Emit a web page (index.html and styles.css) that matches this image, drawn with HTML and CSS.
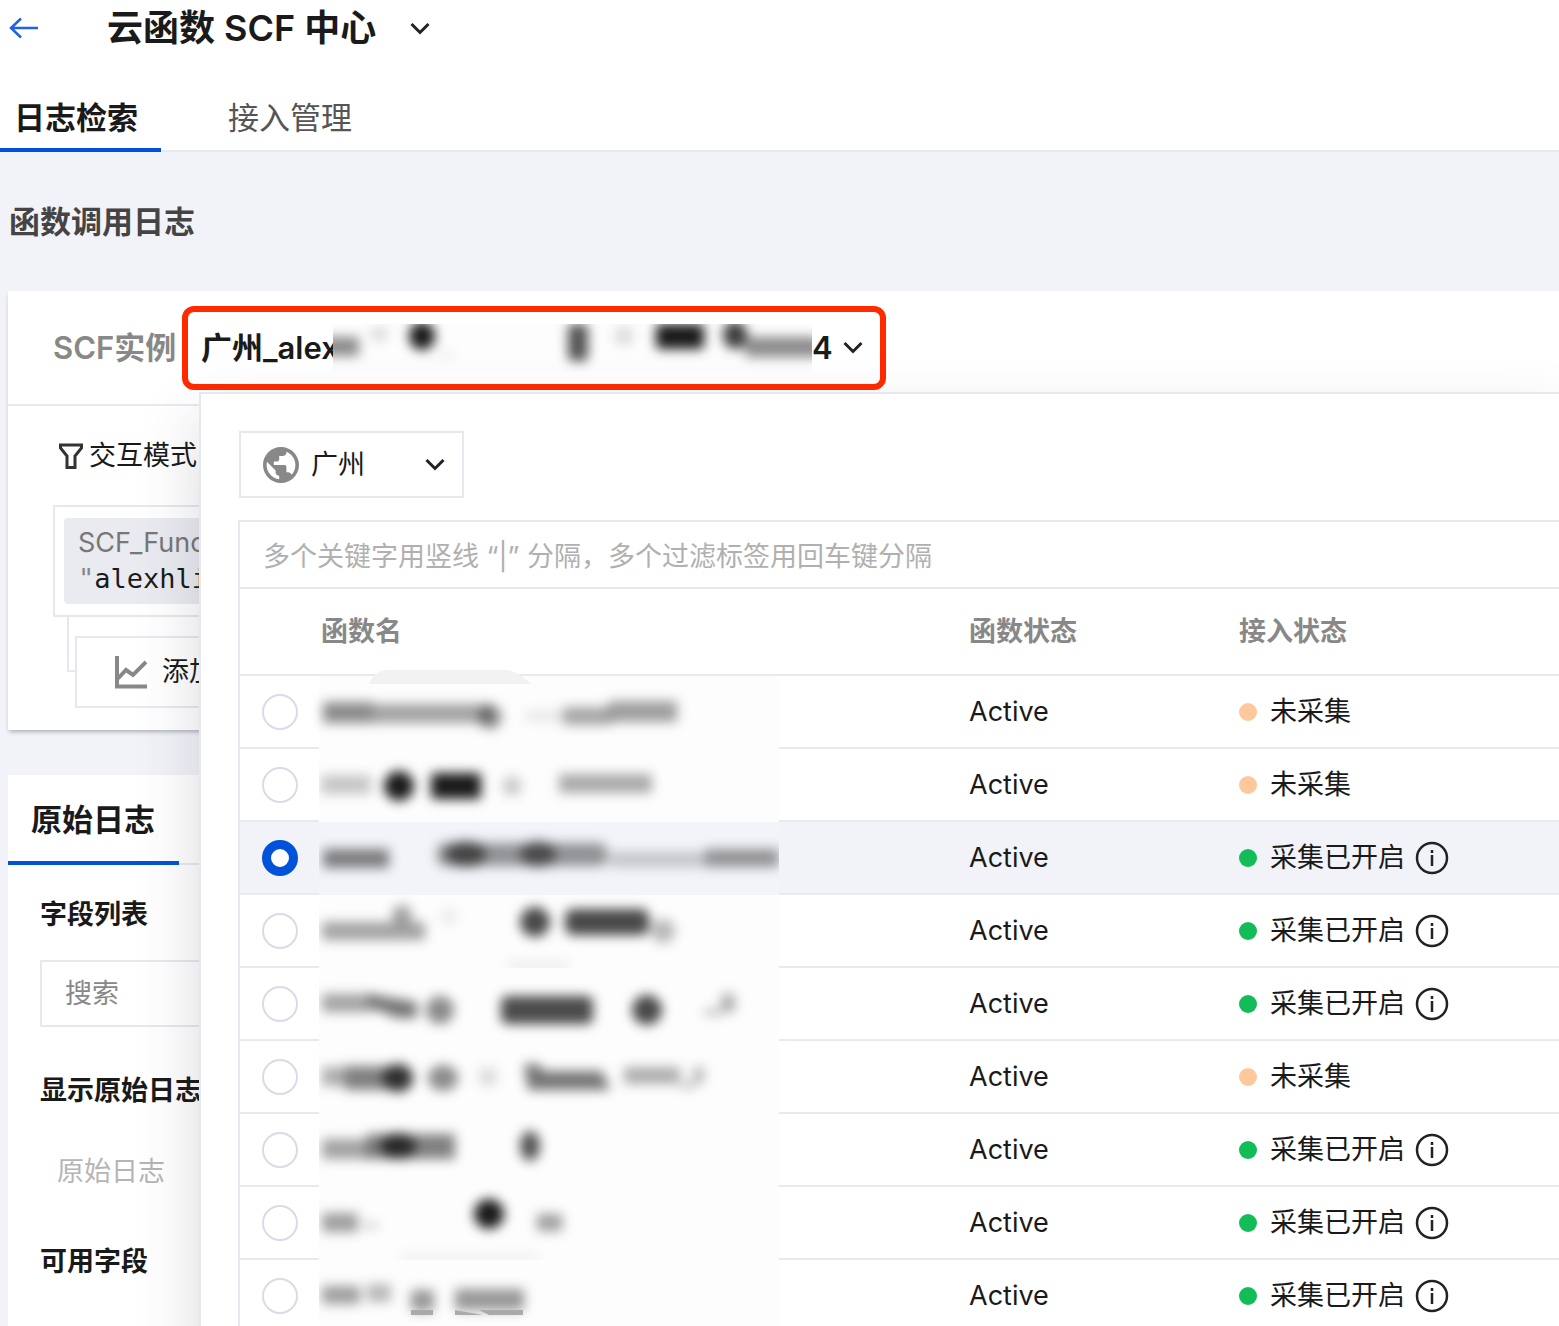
FILE: index.html
```html
<!DOCTYPE html>
<html lang="zh-CN">
<head>
    <meta charset="UTF-8">
    <title>云函数 SCF 中心</title>
    <link rel="stylesheet" href="styles.css">
</head>
<body>
    <div class="page">
        <header class="header">
            <div class="title-bar">
                <a href="#" class="back" aria-label="返回">
                    <svg width="30" height="22" viewBox="0 0 30 22"><path d="M12 1.500 2 11l10 9.500M2 11h27" fill="none" stroke="#1f62e6" stroke-width="2.500"/></svg>
                </a>
                <h1>云函数 SCF 中心</h1>
                <button class="icon-button" aria-label="切换">
                    <svg class="chevron" viewBox="0 0 20 13"><path d="M1.500 2 10 10.500 18.500 2"/></svg>
                </button>
            </div>
            <nav class="tabs">
                <a href="#" class="tab active">日志检索</a>
                <a href="#" class="tab">接入管理</a>
            </nav>
        </header>

        <h2 class="section-title">函数调用日志</h2>

        <main class="content">
            <section class="card query-card">
                <div class="instance-bar">
                    <span class="instance-label">SCF实例</span>
                    <button class="instance-button">
                        <span class="instance-start">广州_alexh</span>
                        <svg class="mosaic mosaic-title" viewBox="0 0 479 48">
                            <g>
                                <rect x="-10" y="13" width="36" height="19" opacity=".5"/>
                                <ellipse cx="46" cy="10" rx="9" ry="8" opacity=".14"/>
                                <ellipse cx="89" cy="12" rx="13" ry="14"/>
                                <rect x="105" y="26" width="16" height="8" opacity=".06"/>
                                <rect x="235" y="0" width="20" height="37" rx="5" opacity=".75"/>
                                <circle cx="291" cy="12" r="10" opacity=".14"/>
                                <rect x="323" y="0" width="48" height="25" rx="4"/>
                                <ellipse cx="402" cy="11" rx="12" ry="14" opacity=".85"/>
                                <rect x="412" y="13" width="76" height="20" opacity=".5"/>
                            </g>
                        </svg>
                        <span class="instance-end">4</span>
                        <svg class="chevron" viewBox="0 0 20 13"><path d="M1.500 2 10 10.500 18.500 2"/></svg>
                    </button>
                </div>

                <div class="query-body">
                    <button class="mode">
                        <svg width="24" height="26" viewBox="0 0 24 26"><path d="M1.500 2h21v3L16 13v11.500H8V13L1.500 5z" fill="none" stroke="#333" stroke-width="3"/></svg>
                        <span>交互模式</span>
                    </button>
                    <div class="query-box">
                        <div class="chip">
                            <div class="chip-key">SCF_FunctionName</div>
                            <div class="chip-value"><span class="quote">"</span>alexhli</div>
                        </div>
                    </div>
                    <div class="add-row">
                        <div class="branch"></div>
                        <button class="add-button">
                            <svg width="32" height="33" viewBox="0 0 32 33"><path d="M2 0v30.500h30" fill="none" stroke="#888" stroke-width="4"/><path d="M3 22.500 11 14l7 5L31 6" fill="none" stroke="#888" stroke-width="4"/></svg>
                            <span>添加</span>
                        </button>
                    </div>
                </div>

                <div class="dropdown">
                    <div class="region">
                        <svg width="36" height="36" viewBox="2 2 20 20"><path fill="#888" d="M12 2C6.480 2 2 6.480 2 12s4.480 10 10 10 10-4.480 10-10S17.520 2 12 2zm-1 17.930c-3.950-.490-7-3.850-7-7.930 0-.620.080-1.210.210-1.790L9 15v1c0 1.100.900 2 2 2v1.930zm6.900-2.540c-.260-.810-1-1.390-1.900-1.390h-1v-3c0-.550-.450-1-1-1H8v-2h2c.550 0 1-.450 1-1V7h2c1.100 0 2-.900 2-2v-.410c2.930 1.190 5 4.060 5 7.410 0 2.080-.800 3.970-2.100 5.390z"/></svg>
                        <select aria-label="地域">
                            <option>广州</option>
                        </select>
                        <svg class="chevron" viewBox="0 0 20 13"><path d="M1.500 2 10 10.500 18.500 2"/></svg>
                    </div>

                    <div class="functions">
                        <input class="filter" type="text" aria-label="过滤" placeholder="多个关键字用竖线 “|” 分隔，多个过滤标签用回车键分隔">
                        <table>
                            <thead>
                                <tr>
                                    <th class="col-radio"></th>
                                    <th class="col-name">函数名</th>
                                    <th class="col-status">函数状态</th>
                                    <th>接入状态</th>
                                </tr>
                            </thead>
                            <tbody>
                                <tr>
                                    <td class="pick"><input type="radio" name="fn" aria-label="函数 1"></td>
                                    <td class="name">
                                        <svg class="mosaic mosaic-first" viewBox="0 0 460 73">
                                            <path class="tab-shape" d="M50 8Q56-6 68-6H186Q198-6 212 8z"/>
                                            <g>
                                                <rect x="4" y="26" width="50" height="21" opacity=".5"/>
                                                <rect x="54" y="28" width="120" height="19" opacity=".4"/>
                                                <circle cx="171" cy="41" r="12" opacity=".45"/>
                                                <rect x="206" y="35" width="38" height="10" opacity=".1"/>
                                                <rect x="244" y="31" width="48" height="18" opacity=".38"/>
                                                <rect x="290" y="25" width="68" height="21" opacity=".42"/>
                                            </g>
                                        </svg>
                                    </td>
                                    <td>Active</td>
                                    <td><div class="state"><i class="dot"></i>未采集</div></td>
                                </tr>
                                <tr>
                                    <td class="pick"><input type="radio" name="fn" aria-label="函数 2"></td>
                                    <td class="name">
                                        <svg class="mosaic" viewBox="0 0 460 73">
                                            <g>
                                                <rect x="2" y="26" width="50" height="19" opacity=".24"/>
                                                <ellipse cx="80" cy="37" rx="15" ry="15"/>
                                                <rect x="112" y="24" width="50" height="26" rx="4"/>
                                                <circle cx="193" cy="37" r="10" opacity=".22"/>
                                                <rect x="240" y="25" width="93" height="19" opacity=".36"/>
                                            </g>
                                        </svg>
                                    </td>
                                    <td>Active</td>
                                    <td><div class="state"><i class="dot"></i>未采集</div></td>
                                </tr>
                                <tr class="selected">
                                    <td class="pick"><input type="radio" name="fn" aria-label="函数 3" checked></td>
                                    <td class="name">
                                        <svg class="mosaic" viewBox="0 0 460 73">
                                            <g>
                                                <rect x="4" y="27" width="66" height="19" opacity=".55"/>
                                                <rect x="118" y="21" width="170" height="23" rx="8" opacity=".45"/>
                                                <ellipse cx="147" cy="32" rx="20" ry="13" opacity=".65"/>
                                                <ellipse cx="219" cy="32" rx="18" ry="13" opacity=".6"/>
                                                <rect x="290" y="30" width="96" height="15" opacity=".22"/>
                                                <rect x="386" y="27" width="74" height="18" opacity=".45"/>
                                            </g>
                                        </svg>
                                    </td>
                                    <td>Active</td>
                                    <td><div class="state on"><i class="dot"></i>采集已开启<svg class="info" viewBox="0 0 34 34"><circle cx="17" cy="17" r="15"/><path d="M17 14v11M17 9v3"/></svg></div></td>
                                </tr>
                                <tr>
                                    <td class="pick"><input type="radio" name="fn" aria-label="函数 4"></td>
                                    <td class="name">
                                        <svg class="mosaic" viewBox="0 0 460 73">
                                            <g>
                                                <rect x="3" y="27" width="103" height="18" opacity=".4"/>
                                                <circle cx="83" cy="20" r="10" opacity=".4"/>
                                                <circle cx="130" cy="22" r="9" opacity=".07"/>
                                                <ellipse cx="216" cy="27" rx="15" ry="15" opacity=".8"/>
                                                <rect x="246" y="14" width="84" height="26" rx="8" opacity=".8"/>
                                                <circle cx="344" cy="36" r="12" opacity=".3"/>
                                                <rect x="188" y="66" width="62" height="10" opacity=".07"/>
                                            </g>
                                        </svg>
                                    </td>
                                    <td>Active</td>
                                    <td><div class="state on"><i class="dot"></i>采集已开启<svg class="info" viewBox="0 0 34 34"><circle cx="17" cy="17" r="15"/><path d="M17 14v11M17 9v3"/></svg></div></td>
                                </tr>
                                <tr>
                                    <td class="pick"><input type="radio" name="fn" aria-label="函数 5"></td>
                                    <td class="name">
                                        <svg class="mosaic" viewBox="0 0 460 73">
                                            <g>
                                                <rect x="3" y="26" width="50" height="18" opacity=".4"/>
                                                <path d="M50 26 98 34v16H78L50 39z" opacity=".6"/>
                                                <circle cx="121" cy="42" r="14" opacity=".5"/>
                                                <rect x="182" y="28" width="92" height="28" rx="6" opacity=".78"/>
                                                <circle cx="328" cy="42" r="15" opacity=".8"/>
                                                <rect x="385" y="42" width="18" height="5" opacity=".35"/>
                                                <rect x="402" y="26" width="14" height="18" opacity=".35"/>
                                            </g>
                                        </svg>
                                    </td>
                                    <td>Active</td>
                                    <td><div class="state on"><i class="dot"></i>采集已开启<svg class="info" viewBox="0 0 34 34"><circle cx="17" cy="17" r="15"/><path d="M17 14v11M17 9v3"/></svg></div></td>
                                </tr>
                                <tr>
                                    <td class="pick"><input type="radio" name="fn" aria-label="函数 6"></td>
                                    <td class="name">
                                        <svg class="mosaic" viewBox="0 0 460 73">
                                            <g>
                                                <rect x="3" y="26" width="24" height="19" opacity=".35"/>
                                                <rect x="26" y="25" width="44" height="24" opacity=".55"/>
                                                <ellipse cx="79" cy="37" rx="15" ry="14" opacity=".9"/>
                                                <ellipse cx="124" cy="37" rx="15" ry="13" opacity=".5"/>
                                                <circle cx="169" cy="36" r="10" opacity=".14"/>
                                                <path d="M205 23h14l6 7h58l8 19h-82z" opacity=".6"/>
                                                <rect x="305" y="26" width="56" height="17" opacity=".35"/>
                                                <rect x="362" y="42" width="14" height="5" opacity=".35"/>
                                                <rect x="374" y="26" width="11" height="16" opacity=".3"/>
                                            </g>
                                        </svg>
                                    </td>
                                    <td>Active</td>
                                    <td><div class="state"><i class="dot"></i>未采集</div></td>
                                </tr>
                                <tr>
                                    <td class="pick"><input type="radio" name="fn" aria-label="函数 7"></td>
                                    <td class="name">
                                        <svg class="mosaic" viewBox="0 0 460 73">
                                            <g>
                                                <rect x="3" y="25" width="48" height="20" opacity=".4"/>
                                                <rect x="48" y="20" width="88" height="25" opacity=".55"/>
                                                <ellipse cx="79" cy="32" rx="18" ry="13" opacity=".85"/>
                                                <ellipse cx="211" cy="32" rx="10" ry="15" opacity=".75"/>
                                            </g>
                                        </svg>
                                    </td>
                                    <td>Active</td>
                                    <td><div class="state on"><i class="dot"></i>采集已开启<svg class="info" viewBox="0 0 34 34"><circle cx="17" cy="17" r="15"/><path d="M17 14v11M17 9v3"/></svg></div></td>
                                </tr>
                                <tr>
                                    <td class="pick"><input type="radio" name="fn" aria-label="函数 8"></td>
                                    <td class="name">
                                        <svg class="mosaic" viewBox="0 0 460 73">
                                            <g>
                                                <rect x="3" y="26" width="36" height="19" opacity=".42"/>
                                                <rect x="46" y="36" width="12" height="5" opacity=".3"/>
                                                <circle cx="170" cy="27" r="15"/>
                                                <rect x="218" y="27" width="25" height="17" opacity=".42"/>
                                                <rect x="80" y="66" width="140" height="10" opacity=".05"/>
                                            </g>
                                        </svg>
                                    </td>
                                    <td>Active</td>
                                    <td><div class="state on"><i class="dot"></i>采集已开启<svg class="info" viewBox="0 0 34 34"><circle cx="17" cy="17" r="15"/><path d="M17 14v11M17 9v3"/></svg></div></td>
                                </tr>
                                <tr>
                                    <td class="pick"><input type="radio" name="fn" aria-label="函数 9"></td>
                                    <td class="name">
                                        <svg class="mosaic" viewBox="0 0 460 73">
                                            <g>
                                                <rect x="3" y="26" width="38" height="18" opacity=".42"/>
                                                <rect x="48" y="24" width="24" height="18" opacity=".3"/>
                                                <rect x="92" y="30" width="23" height="21" opacity=".45"/>
                                                <rect x="136" y="29" width="69" height="21" opacity=".45"/>
                                            </g>
                                            <path class="sharp" d="M92 50h22v5H92zM136 50l28 5h-28zM160 50h44v5h-34z"/>
                                        </svg>
                                    </td>
                                    <td>Active</td>
                                    <td><div class="state on"><i class="dot"></i>采集已开启<svg class="info" viewBox="0 0 34 34"><circle cx="17" cy="17" r="15"/><path d="M17 14v11M17 9v3"/></svg></div></td>
                                </tr>
                            </tbody>
                        </table>
                    </div>
                </div>
            </section>

            <section class="card log-card">
                <nav class="log-tabs">
                    <a href="#" class="log-tab">原始日志</a>
                </nav>
                <div class="fields">
                    <h3>字段列表</h3>
                    <input class="field-search" type="text" aria-label="搜索" placeholder="搜索">
                    <h3>显示原始日志</h3>
                    <p class="muted">原始日志</p>
                    <h3>可用字段</h3>
                </div>
            </section>
        </main>
    </div>
</body>
</html>
```
FILE: styles.css
```css
* {
    box-sizing: border-box;
}
body {
    margin: 0;
    font-family: Inter, "Noto Sans CJK SC", sans-serif;
    font-size: 27px;
    line-height: 36px;
    color: #1a1a1a;
    background-color: #f2f3f8;
}
button, input, select {
    font: inherit;
    color: inherit;
    background: none;
    border: none;
    border-radius: 0;
    padding: 0;
    margin: 0;
}
a {
    color: inherit;
    text-decoration: none;
}
h1, h2, h3, p {
    margin: 0;
}
svg {
    flex: none;
    display: block;
}
.page {
    height: 100vh;
    overflow: hidden;
    display: flex;
    flex-direction: column;
}
.chevron {
    width: 20px;
    height: 13px;
    fill: none;
    stroke: #222;
    stroke-width: 3;
}

/* header */
.header {
    background-color: white;
}
.title-bar {
    display: flex;
    align-items: center;
    height: 56px;
    padding-left: 9px;
}
.title-bar h1 {
    margin: 0 34px 0 68px;
    font-size: 36px;
    font-weight: 600;
}
.tabs {
    display: flex;
    margin-top: 30px;
    border-bottom: 2px solid #e7eaef;
}
.tab {
    height: 66px;
    margin: 0 53px -2px 0;
    padding: 14px 23px 0 14px;
    font-size: 31px;
    color: #555;
}
.tab.active {
    color: #1a1a1a;
    font-weight: 600;
    border-bottom: 4px solid #0052d9;
}
.section-title {
    padding: 52px 9px 51px;
    font-size: 31px;
    font-weight: 600;
    color: #444;
}

/* query card */
.content {
    flex: 1;
    display: flex;
    flex-direction: column;
    gap: 45px;
    padding-left: 8px;
}
.card {
    flex: none;
    background-color: white;
}
.query-card {
    position: relative;
    box-shadow: 0 3px 4px -1px rgba(54, 58, 80, 0.35);
}
.instance-bar {
    display: flex;
    align-items: center;
    height: 115px;
    padding-left: 45px;
    border-bottom: 2px solid #e7eaef;
    font-size: 31px;
    font-weight: 600;
}
.instance-label {
    width: 129px;
    color: #888;
    white-space: nowrap;
}
.instance-button {
    display: flex;
    align-items: center;
    height: 84px;
    padding: 0 17px 0 13px;
    border: 6px solid #ff2a00;
    border-radius: 12px;
}
.instance-start {
    width: 132px;
    overflow: hidden;
    text-align: left;
    white-space: nowrap;
}
.instance-end {
    margin-right: 10px;
}
.query-body {
    padding: 32px 0 22px 45px;
}
.mode {
    display: flex;
    align-items: center;
    gap: 6px;
    padding-left: 6px;
    margin-bottom: 31px;
}
.query-box {
    padding: 11px 9px;
    border: 2px solid #e5e8ef;
}
.chip {
    display: inline-block;
    vertical-align: top;
    padding: 7px 14px;
    border-radius: 4px;
    background-color: #eaebf0;
}
.chip-key {
    color: #777;
}
.chip-value {
    font-family: "DejaVu Sans Mono", monospace;
}
.quote {
    color: #888;
}
.add-row {
    display: flex;
    padding-left: 14px;
}
.branch {
    width: 8px;
    height: 55px;
    border-left: 2px solid #e5e8ef;
    border-bottom: 2px solid #e5e8ef;
}
.add-button {
    flex: 1;
    display: flex;
    align-items: center;
    gap: 15px;
    height: 72px;
    margin-top: 19px;
    padding-left: 38px;
    border: 2px solid #e5e8ef;
}

/* instance dropdown */
.dropdown {
    position: absolute;
    z-index: 1;
    top: 101px;
    left: 191px;
    right: 0;
    padding: 37px 0 80px 37px;
    background-color: white;
    border: 2px solid #e5e8ef;
    border-right: none;
    box-shadow: 0 28px 60px rgba(54, 58, 80, 0.18);
}
.region {
    display: flex;
    align-items: center;
    width: 225px;
    height: 67px;
    margin: 0 0 22px 1px;
    padding: 0 17px 0 22px;
    border: 2px solid #e5e8ef;
}
.region select {
    flex: 1;
    height: 36px;
    padding-left: 12px;
    appearance: none;
}
.functions {
    border: 2px solid #e5e8ef;
    border-right: none;
}
.filter {
    display: block;
    width: 100%;
    height: 67px;
    padding: 3px 0 0 23px;
    border-bottom: 2px solid #e5e8ef;
}
::placeholder {
    color: #b0b0b0;
    opacity: 1;
}
table {
    width: 100%;
    border-collapse: separate;
    border-spacing: 0;
    table-layout: fixed;
}
th, td {
    height: 73px;
    padding: 0;
    text-align: left;
    border-bottom: 2px solid #e7eaef;
}
th {
    height: 87px;
    color: #888;
    font-weight: 600;
}
.col-radio {
    width: 81px;
}
.col-name {
    width: 648px;
}
.col-status {
    width: 270px;
}
.pick {
    padding-left: 22px;
}
.pick input {
    display: block;
    appearance: none;
    width: 36px;
    height: 36px;
    border: 2px solid #d8dce6;
    border-radius: 50%;
    background-color: white;
}
.pick input:checked {
    border: 9px solid #0052d9;
}
.selected td {
    background-color: #f2f3f8;
}
.name {
    vertical-align: top;
}
.state {
    display: flex;
    align-items: center;
}
.dot {
    width: 18px;
    height: 18px;
    margin-right: 13px;
    border-radius: 50%;
    background-color: #ffc89c;
}
.on .dot {
    background-color: #12bd58;
}
.info {
    width: 34px;
    height: 34px;
    margin-left: 10px;
    fill: none;
    stroke: #222;
    stroke-width: 2.5;
}

/* masked names */
.mosaic {
    position: relative;
    width: 460px;
    height: 73px;
    margin: 0 0 -2px -2px;
    background-color: #fdfdfd;
}
.mosaic g {
    fill: #1a1a1a;
    filter: blur(6px);
}
.mosaic-title {
    width: 479px;
    height: 48px;
    margin: 0;
}
.mosaic-first {
    overflow: visible;
}
.tab-shape {
    fill: #f2f2f2;
}
.sharp {
    fill: #aaa;
}
.selected .mosaic {
    background-color: #f3f4f9;
}

/* raw log card */
.log-card {
    flex: 1;
}
.log-tabs {
    display: flex;
    border-bottom: 2px solid #e7eaef;
}
.log-tab {
    height: 90px;
    margin-bottom: -2px;
    padding: 27px 24px 0 23px;
    border-bottom: 4px solid #0052d9;
    font-size: 31px;
    font-weight: 600;
}
.fields {
    padding: 32px 32px 0;
}
.fields h3 {
    font-size: 27px;
    font-weight: 600;
}
.field-search {
    display: block;
    width: 100%;
    height: 67px;
    margin: 27px 0 46px;
    padding-left: 23px;
    border: 2px solid #e5e8ef;
}
.field-search::placeholder {
    color: #888;
}
.muted {
    padding-left: 17px;
    margin: 45px 0 54px;
    color: #b5b5b5;
}
```
